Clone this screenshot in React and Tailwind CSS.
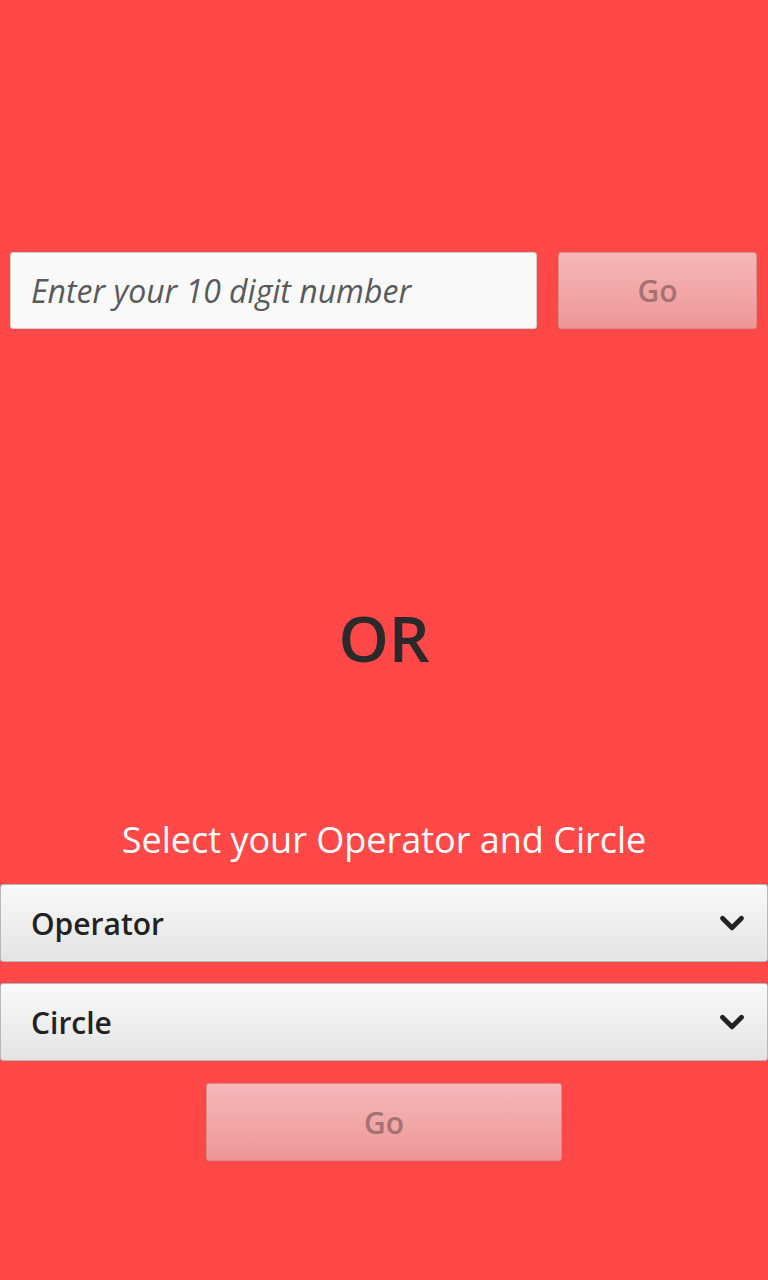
import { ChevronDown } from 'lucide-react';

const goBtn =
    'flex items-center justify-center rounded-[3px] border border-[#d98a8a] bg-gradient-to-b from-[#f4b8b8] to-[#ee9696] text-[30px] font-semibold text-[#a57272]';

function Dropdown({ label }) {
    return (
        <div className="flex h-[78px] items-center justify-between rounded-[3px] border border-[#b8b8b8] bg-gradient-to-b from-[#f9f9f9] to-[#e4e4e4] pl-[30px] pr-[16px]">
            <span className="text-[30px] font-semibold text-[#222]">{label}</span>
            <ChevronDown className="h-[38px] w-[38px] text-[#222]" strokeWidth={3} />
        </div>
    );
}

export default function App() {
    return (
        <div
            className="min-h-[1280px] bg-[#ff4848] pt-[252px]"
            style={{ fontFamily: '"Open Sans", sans-serif' }}
        >
            {/* Number row */}
            <div className="flex gap-[21px] pl-[10px] pr-[11px]">
                <div className="flex h-[77px] flex-1 items-center rounded-[3px] border border-[#cfcfcf] bg-[#f9f9f9] pl-[20px]">
                    <span className="text-[32px] italic text-[#5a5a5a]">Enter your 10 digit number</span>
                </div>
                <button className={`${goBtn} h-[77px] w-[199px]`}>Go</button>
            </div>

            {/* OR */}
            <div className="mt-[277px] text-center text-[64px] font-semibold leading-none text-[#2a2a2a]">
                OR
            </div>

            {/* Operator and circle */}
            <div className="mt-[152px] text-center text-[36px] leading-none text-white">
                Select your Operator and Circle
            </div>
            <div className="mt-[26px] flex flex-col gap-[21px]">
                <Dropdown label="Operator" />
                <Dropdown label="Circle" />
            </div>
            <div className="mt-[22px] flex justify-center">
                <button className={`${goBtn} h-[78px] w-[356px]`}>Go</button>
            </div>
        </div>
    );
}
